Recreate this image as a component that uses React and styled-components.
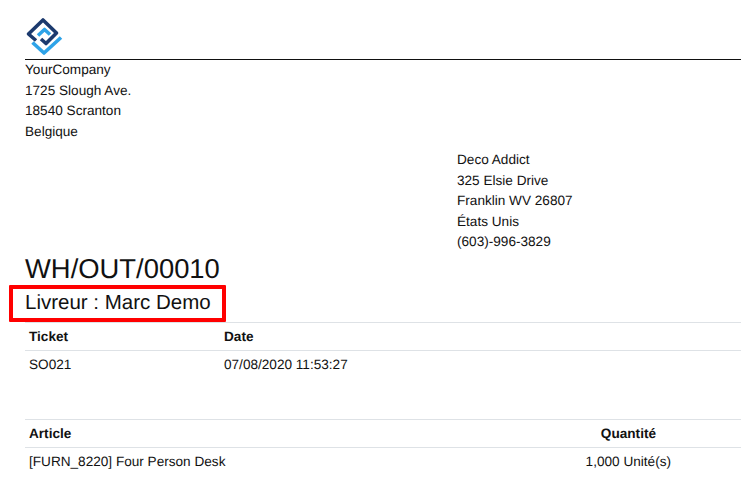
import React from "react";
import styled, { createGlobalStyle } from "styled-components";

const Global = createGlobalStyle`
  html, body { margin: 0; padding: 0; background: #fff; }
  body { font-family: "Liberation Sans", Arial, sans-serif; color: #111; text-rendering: geometricPrecision; }
`;
const Page = styled.div`
  width: 750px; height: 498px; overflow: hidden; box-sizing: border-box;
  padding: 17px 9px 0 25px; background: #fff;
`;
const LogoBox = styled.div`height: 42px; display: flex; align-items: flex-start;`;
const Header = styled.div`border-top: 1px solid #111;`;
const Address = styled.div`font-size: 13.6px; line-height: 20.5px;`;
const Recipient = styled(Address)`margin: 8px 0 0 432px;`;
const Title = styled.h1`font-size: 27.4px; font-weight: 400; line-height: 32px; margin: 0; color: #111;`;
const Callout = styled.div`
  position: relative; height: 37px; display: flex; align-items: center; font-size: 20.5px;
  &::after { content: ""; position: absolute; left: -16px; top: 0; width: 217px; height: 37px;
    border: 4px solid #f00; box-sizing: border-box; border-radius: 1px; }
`;
const Table = styled.div`border-top: 1px solid #dee2e6;`;
const Row = styled.div`
  display: grid; grid-template-columns: ${p => p.$cols}; padding: 0 3px 0 4px;
  font-size: 13.6px; height: ${p => p.$h}px; align-items: center;
  ${p => p.$head ? "font-weight: 700; border-bottom: 1px solid #dee2e6;" : ""}
`;
const Right = styled.span`text-align: right; padding-right: ${p => p.$pr || 0}px;`;
const Spacer = styled.div`height: 40px;`;

const Logo = () => (
  <svg width="40" height="40" viewBox="0 0 40 40" fill="none" strokeWidth="3.6" strokeLinejoin="round">
    <path d="M11 23.5 L3.5 17 L18 3 L31.5 16 L21 26.5 L16 22" stroke="#1c3a6e" />
    <path d="M36 20.5 L19 36 L7.5 25.5" stroke="#2ea3e8" />
    <path d="M13 18.5 L19.5 12.5 L25 17.5" stroke="#2ea3e8" />
  </svg>
);

export default function App() {
  return (
    <Page>
      <Global />
      <LogoBox><Logo /></LogoBox>
      <Header>
        <Address>YourCompany<br />1725 Slough Ave.<br />18540 Scranton<br />Belgique</Address>
      </Header>
      <Recipient>Deco Addict<br />325 Elsie Drive<br />Franklin WV 26807<br />États Unis<br />(603)-996-3829</Recipient>
      <Title>WH/OUT/00010</Title>
      <Callout>Livreur : Marc Demo</Callout>
      <Table>
        <Row $head $cols="195px 1fr" $h={27}><span>Ticket</span><span>Date</span></Row>
        <Row $cols="195px 1fr" $h={28}><span>SO021</span><span>07/08/2020 11:53:27</span></Row>
      </Table>
      <Spacer />
      <Table>
        <Row $head $cols="1fr 1fr" $h={27}><span>Article</span><Right $pr={82}>Quantité</Right></Row>
        <Row $cols="1fr 1fr" $h={28}><span>[FURN_8220] Four Person Desk</span><Right $pr={67}>1,000 Unité(s)</Right></Row>
      </Table>
    </Page>
  );
}
